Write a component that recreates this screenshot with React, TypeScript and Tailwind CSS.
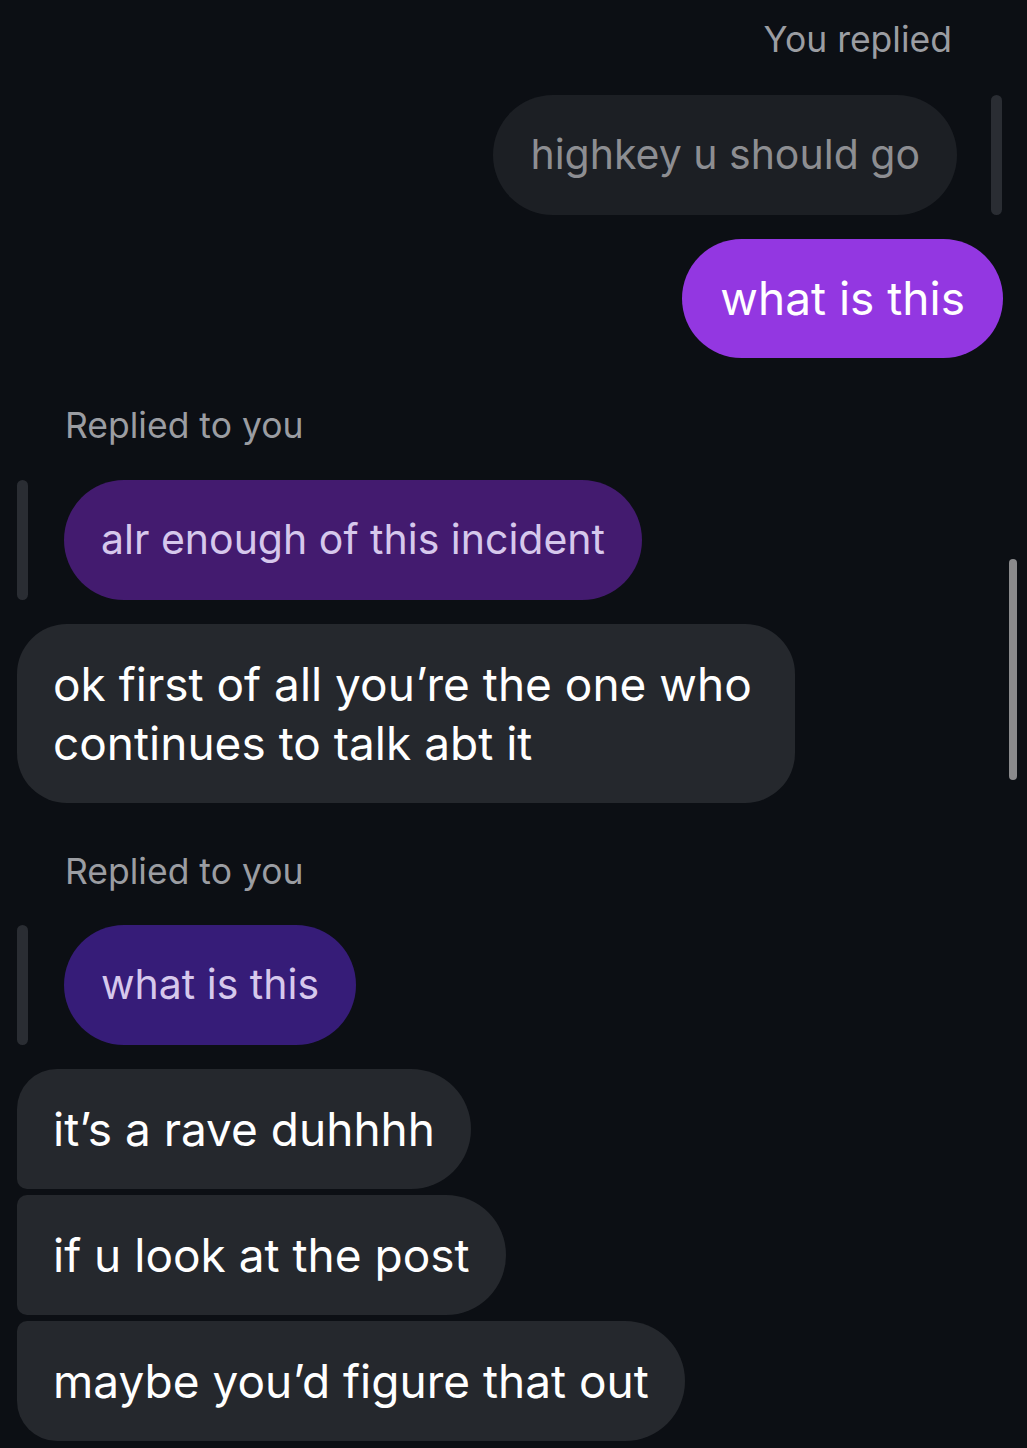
const FONT = "font-['Inter','Noto_Sans',sans-serif]"

function Label({ children }: { children: React.ReactNode }) {
  return <div className="pl-[65px] text-[35.5px] leading-[40px] text-[#9b9da2]">{children}</div>
}

function Bar() {
  return <div className="w-[11px] h-[120px] rounded-full bg-[#2a2d33] shrink-0" />
}

export default function App() {
  return (
    <div className={`${FONT} relative w-[1027px] h-[1448px] overflow-hidden bg-[#0c0f14] flex flex-col`}>
      {/* scrollbar */}
      <div className="absolute left-[1009px] top-[559px] w-[8px] h-[221px] rounded-full bg-[#8a8a8c]" />

      <div className="mt-[20px] flex justify-end pr-[75px] text-[35.5px] leading-[40px] text-[#9b9da2]">
        You replied
      </div>

      {/* my reply quote */}
      <div className="mt-[35px] flex justify-end items-start pr-[25px] gap-[34px]">
        <div className="h-[120px] flex items-center px-[37px] rounded-full bg-[#1c1f24] text-[41px] text-[#8d8e92]">
          highkey u should go
        </div>
        <Bar />
      </div>

      <div className="mt-[24px] flex justify-end pr-[24px]">
        <div className="h-[119px] flex items-center px-[38px] rounded-full bg-[#9337e1] text-[46px] text-white">
          what is this
        </div>
      </div>

      <div className="mt-[48px]">
        <Label>Replied to you</Label>
      </div>

      <div className="mt-[34px] flex items-start pl-[17px] gap-[36px]">
        <Bar />
        <div className="h-[120px] flex items-center px-[37px] rounded-full bg-[#431b6f] text-[41px] text-[#d6c8ec]">
          alr enough of this incident
        </div>
      </div>

      <div className="mt-[24px] pl-[17px]">
        <div className="w-[778px] h-[179px] flex items-center px-[36px] rounded-[50px] bg-[#25282d] text-[46px] leading-[59px] text-white">
          ok first of all you’re the one who continues to talk abt it
        </div>
      </div>

      <div className="mt-[49px]">
        <Label>Replied to you</Label>
      </div>

      <div className="mt-[33px] flex items-start pl-[17px] gap-[36px]">
        <Bar />
        <div className="h-[120px] flex items-center px-[37px] rounded-full bg-[#361c78] text-[41px] text-[#d6c8ec]">
          what is this
        </div>
      </div>

      <div className="mt-[24px] pl-[17px] flex flex-col items-start gap-[6px]">
        <div className="h-[120px] flex items-center px-[36px] rounded-tl-[40px] rounded-bl-[10px] rounded-r-[60px] bg-[#25282d] text-[46px] text-white">
          it’s a rave duhhhh
        </div>
        <div className="h-[120px] flex items-center px-[36px] rounded-l-[10px] rounded-r-[60px] bg-[#25282d] text-[46px] text-white">
          if u look at the post
        </div>
        <div className="h-[120px] flex items-center px-[36px] rounded-tl-[10px] rounded-bl-[40px] rounded-r-[60px] bg-[#25282d] text-[46px] text-white">
          maybe you’d figure that out
        </div>
      </div>
    </div>
  )
}
